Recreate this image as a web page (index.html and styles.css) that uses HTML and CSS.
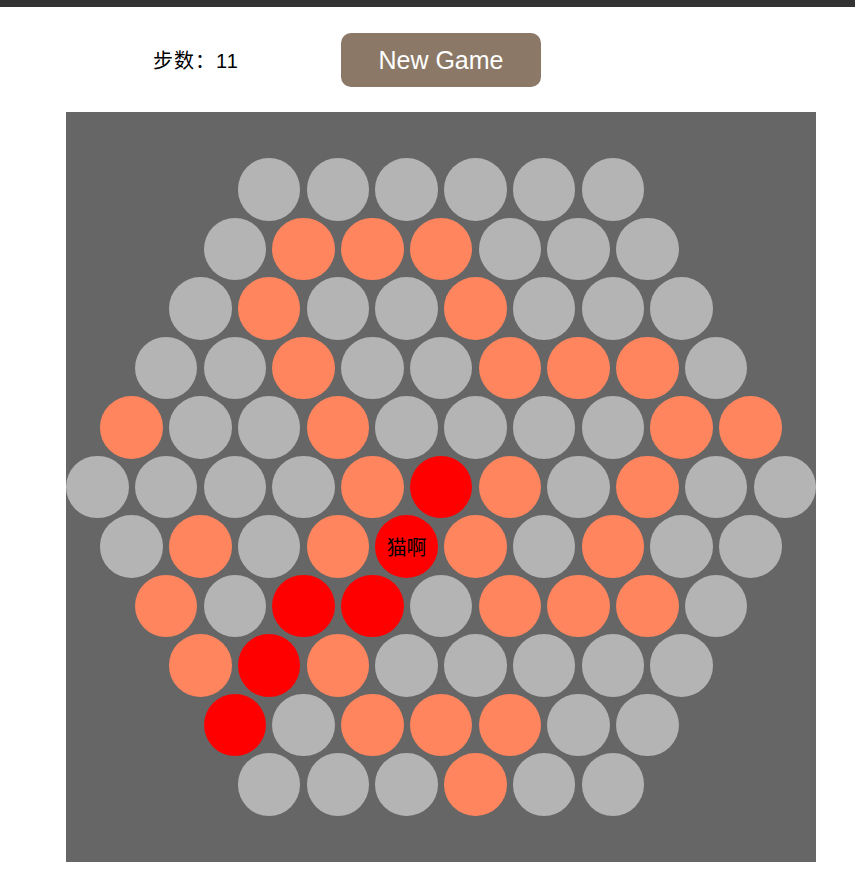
FILE: index.html
```html
<!DOCTYPE html>
<html lang="zh">
<head>
<meta charset="utf-8">
<title>围住神经猫</title>
<link rel="stylesheet" href="styles.css">
</head>
<body>
<div class="topbar"></div>
<div class="header">
  <div class="steps">步数：11</div>
  <button class="new-game">New Game</button>
</div>
<div class="board">
  <div class="row"><div class="c"></div><div class="c"></div><div class="c"></div><div class="c"></div><div class="c"></div><div class="c"></div></div>
  <div class="row"><div class="c"></div><div class="c o"></div><div class="c o"></div><div class="c o"></div><div class="c"></div><div class="c"></div><div class="c"></div></div>
  <div class="row"><div class="c"></div><div class="c o"></div><div class="c"></div><div class="c"></div><div class="c o"></div><div class="c"></div><div class="c"></div><div class="c"></div></div>
  <div class="row"><div class="c"></div><div class="c"></div><div class="c o"></div><div class="c"></div><div class="c"></div><div class="c o"></div><div class="c o"></div><div class="c o"></div><div class="c"></div></div>
  <div class="row"><div class="c o"></div><div class="c"></div><div class="c"></div><div class="c o"></div><div class="c"></div><div class="c"></div><div class="c"></div><div class="c"></div><div class="c o"></div><div class="c o"></div></div>
  <div class="row"><div class="c"></div><div class="c"></div><div class="c"></div><div class="c"></div><div class="c o"></div><div class="c r"></div><div class="c o"></div><div class="c"></div><div class="c o"></div><div class="c"></div><div class="c"></div></div>
  <div class="row"><div class="c"></div><div class="c o"></div><div class="c"></div><div class="c o"></div><div class="c r cat">猫啊</div><div class="c o"></div><div class="c"></div><div class="c o"></div><div class="c"></div><div class="c"></div></div>
  <div class="row"><div class="c o"></div><div class="c"></div><div class="c r"></div><div class="c r"></div><div class="c"></div><div class="c o"></div><div class="c o"></div><div class="c o"></div><div class="c"></div></div>
  <div class="row"><div class="c o"></div><div class="c r"></div><div class="c o"></div><div class="c"></div><div class="c"></div><div class="c"></div><div class="c"></div><div class="c"></div></div>
  <div class="row"><div class="c r"></div><div class="c"></div><div class="c o"></div><div class="c o"></div><div class="c o"></div><div class="c"></div><div class="c"></div></div>
  <div class="row"><div class="c"></div><div class="c"></div><div class="c"></div><div class="c o"></div><div class="c"></div><div class="c"></div></div>
</div>
</body>
</html>
```
FILE: styles.css
```css
html, body {
  margin: 0;
  padding: 0;
  background: #ffffff;
  font-family: "Liberation Sans", "Noto Sans CJK SC", sans-serif;
}

.topbar {
  height: 7px;
  background: #333333;
}

.header {
  display: flex;
  align-items: center;
  margin-top: 26px;
  padding-left: 153px;
  height: 54px;
}

.steps {
  width: 188px;
  font-size: 20px;
  letter-spacing: 1px;
  color: #000;
  line-height: 24px;
  padding-top: 1px;
}

.new-game {
  width: 200px;
  height: 54px;
  border: none;
  border-radius: 10px;
  background: #8b7866;
  color: #ffffff;
  font-family: "Liberation Sans", Arial, sans-serif;
  font-size: 25px;
  padding: 0;
  cursor: pointer;
}

.board {
  box-sizing: border-box;
  margin: 25px 0 0 66px;
  width: 750px;
  height: 750px;
  background: #666666;
  padding: 46px 0;
  display: flex;
  flex-direction: column;
  align-items: center;
}

.row {
  display: flex;
  justify-content: center;
  gap: 6.25px;
  height: 62.5px;
}

.row + .row {
  margin-top: -2.96px;
}

.c {
  width: 62.5px;
  height: 62.5px;
  border-radius: 50%;
  background: #b4b4b4;
  flex: none;
  display: flex;
  align-items: center;
  justify-content: center;
}

.c.o {
  background: #ff855f;
}

.c.r {
  background: #ff0000;
}

.cat {
  font-family: "Noto Sans CJK SC", sans-serif;
  font-size: 20px;
  color: #000;
}
```
